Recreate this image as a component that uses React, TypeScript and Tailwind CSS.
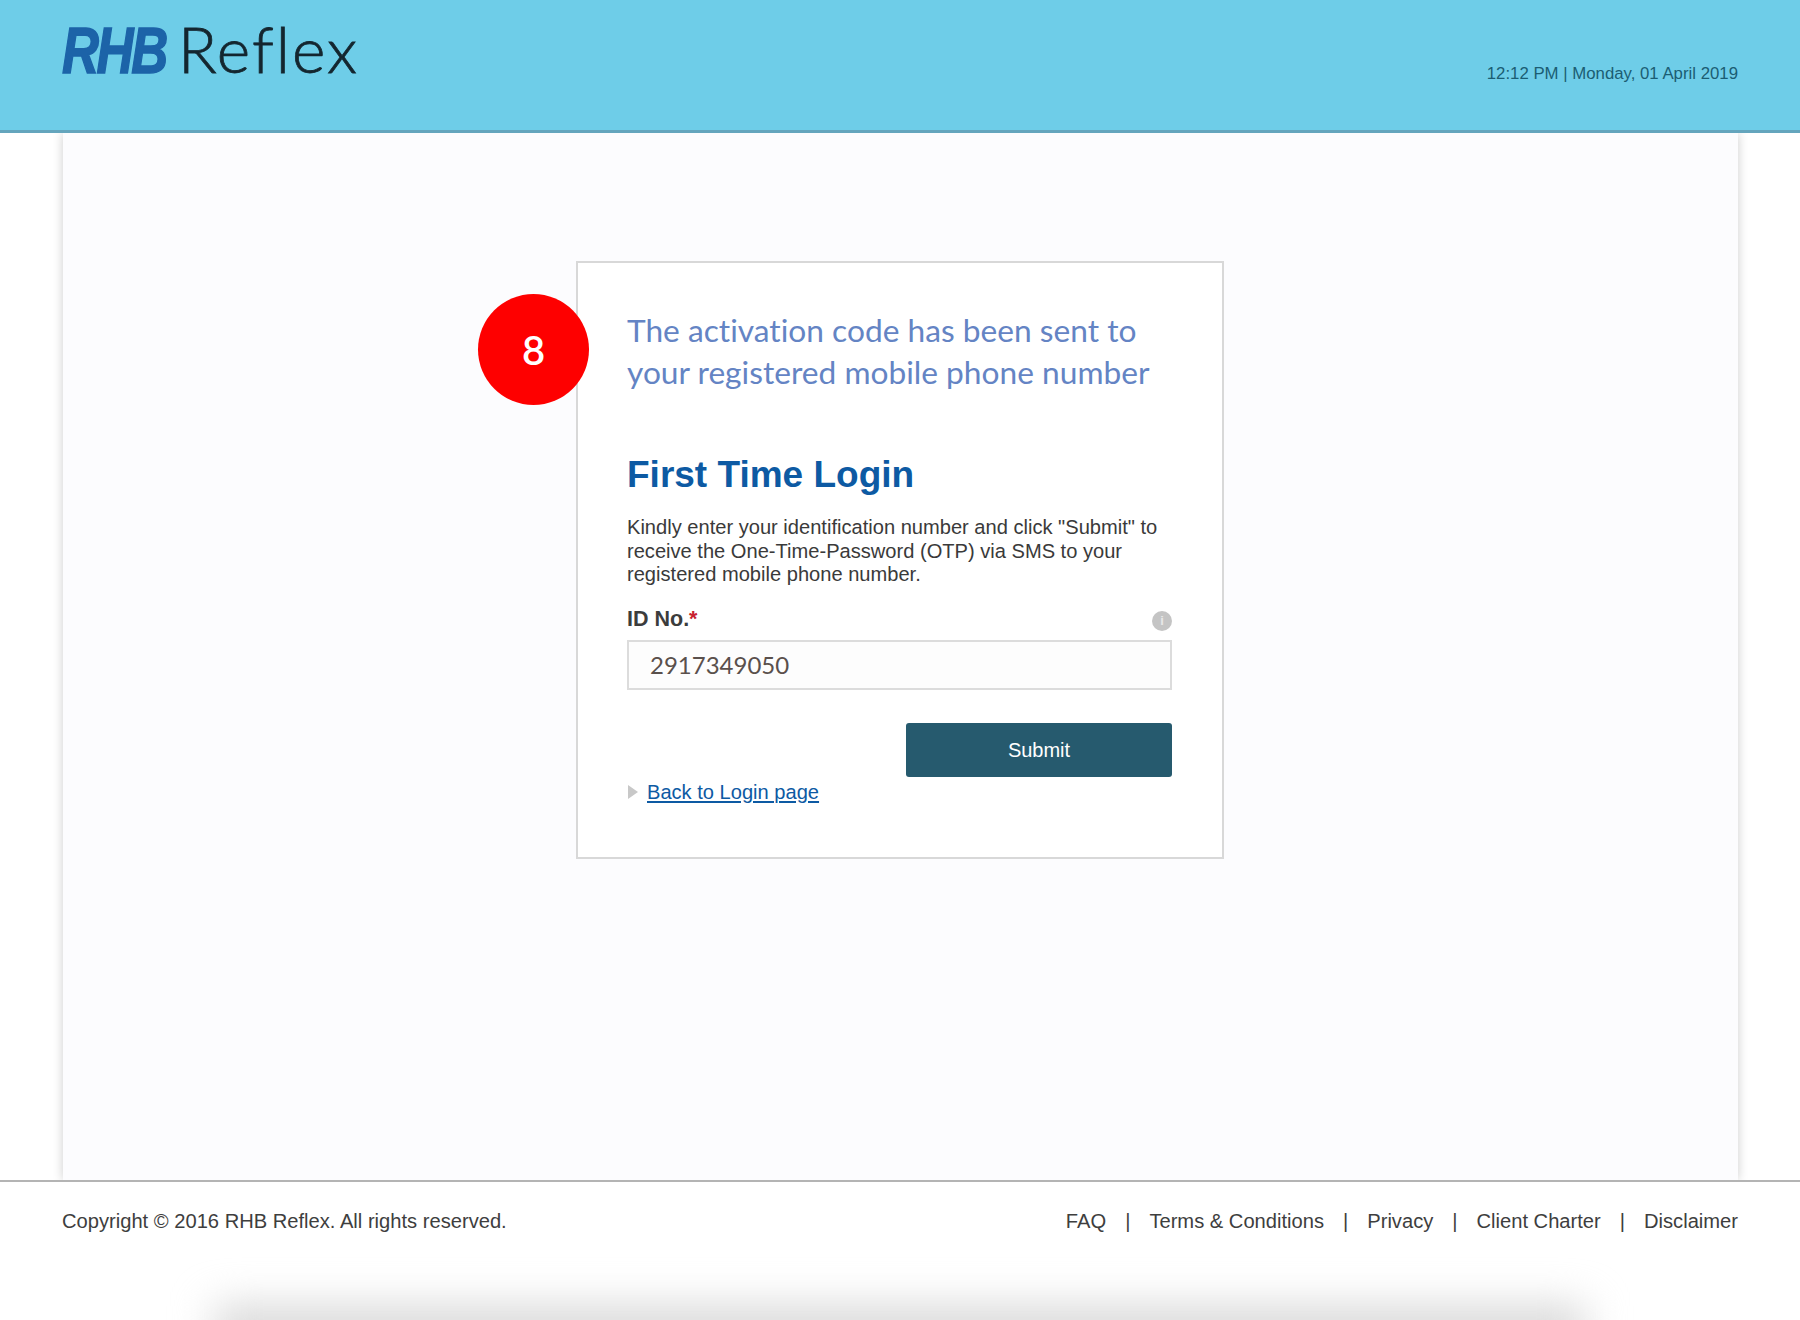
import React from 'react';

const arial = { fontFamily: '"Liberation Sans", Arial, sans-serif' };

const footerLinks = ['FAQ', 'Terms & Conditions', 'Privacy', 'Client Charter', 'Disclaimer'];

export default function App() {
  return (
    <div className="relative h-[1320px] w-[1800px] overflow-hidden bg-white font-['Liberation_Sans',sans-serif]">
      <header className="relative z-10 flex h-[133px] items-start justify-between border-b-[3px] border-[#64a5bd] bg-[#6ecde8] pl-[62px] pr-[62px]">
        <div className="mt-[11px] flex items-baseline">
          <span className="inline-block w-[102px] origin-left scale-x-[0.8] text-[64px] leading-[76px] font-bold italic tracking-[-3px] text-[#1c63a8] [-webkit-text-stroke:1.5px_#1c63a8]">RHB</span>
          <span className="ml-[14px] text-[64px] leading-[76px] font-light tracking-[2px] text-[#14262f] [-webkit-text-stroke:0.8px_#14262f] font-['Lato',sans-serif]">Reflex</span>
        </div>
        <div className="mt-[63px] text-[16.8px] leading-[22px] text-[#1b5d73]">12:12 PM | Monday, 01 April 2019</div>
      </header>

      <main className="ml-[63px] mr-[62px] h-[1047px] bg-[#fcfcfe] pt-[128px] shadow-[0_0_10px_rgba(0,0,0,0.2)]">
        <div className="relative ml-[513px] h-[598px] w-[648px] border-2 border-[#d8d8d8] bg-white pl-[49px] pt-[46px]">
          <div className="absolute left-[-100px] top-[31px] flex h-[111px] w-[111px] items-center justify-center rounded-full bg-[#fe0000] text-[40px] font-semibold text-white font-['Lato',sans-serif]">8</div>

          <p className="whitespace-nowrap text-[31.7px] leading-[42px] text-[#6484c4] [font-variant-ligatures:none] font-['Lato',sans-serif]">
            The activation code has been sent to
            <br />
            your registered mobile phone number
          </p>

          <h1 className="mt-[57px] text-[37px] leading-[50px] font-bold text-[#0d5aa3]">First Time Login</h1>

          <p className="mt-[16px] text-[20.1px] leading-[23.5px] text-[#3a3a3a]">
            Kindly enter your identification number and click "Submit" to
            <br />
            receive the One-Time-Password (OTP) via SMS to your
            <br />
            registered mobile phone number.
          </p>

          <div className="mt-[17px] flex w-[545px] items-center justify-between">
            <label className="text-[21.5px] leading-[30px] font-bold text-[#3c3c3c]">
              ID No.<span className="text-[#c8202f]">*</span>
            </label>
            <span className="mt-[5px] flex h-[20px] w-[20px] items-center justify-center rounded-full bg-[#c4c4c4] text-[13px] font-bold text-[#e8e8e8]">i</span>
          </div>

          <div className="mt-[6px] flex h-[50px] w-[545px] items-center border-2 border-[#dcdcdc] bg-[#fdfdfd] pl-[21px] text-[24px] text-[#5a504c] font-['Lato',sans-serif]">
            2917349050
          </div>

          <div className="mt-[33px] flex w-[545px] justify-end">
            <button className="h-[54px] w-[266px] rounded-[3px] bg-[#265a6e] text-[20px] font-medium text-white">Submit</button>
          </div>

          <div className="mt-[1px] flex items-center">
            <svg width="12" height="16" viewBox="0 0 12 16" className="mr-[8px]">
              <path d="M1 1 L11 8 L1 15 Z" fill="#c8c8c8" />
            </svg>
            <a className="text-[20.1px] leading-[28px] text-[#0d5aa3] underline">Back to Login page</a>
          </div>
        </div>
      </main>

      <footer className="relative flex h-[140px] items-start justify-between border-t-2 border-[#b4b4b4] bg-white pl-[62px] pr-[62px] pt-[26px] text-[20.15px] leading-[26px] text-[#3e3e3e]" style={arial}>
        <span>Copyright © 2016 RHB Reflex. All rights reserved.</span>
        <nav className="flex items-center">
          {footerLinks.map((link, i) => (
            <React.Fragment key={link}>
              {i > 0 && <span className="px-[19px]">|</span>}
              <a>{link}</a>
            </React.Fragment>
          ))}
        </nav>
      </footer>

      <div className="absolute bottom-[-30px] left-[215px] h-[44px] w-[1370px] bg-[#d6d6d6] blur-[20px]" />
    </div>
  );
}
